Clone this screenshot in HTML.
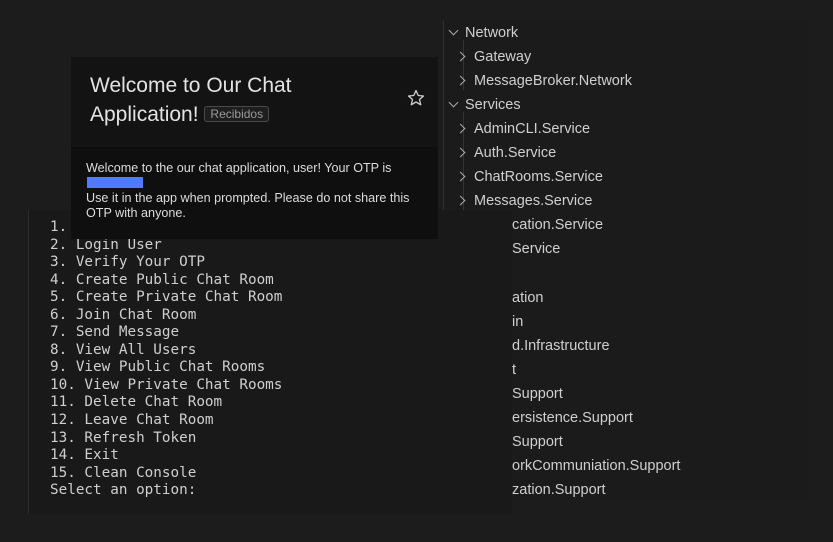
<!DOCTYPE html>
<html><head><meta charset="utf-8"><style>
*{margin:0;padding:0;box-sizing:border-box}
body{width:833px;height:542px;background:#1c1c1c;position:relative;overflow:hidden;font-family:"Liberation Sans",sans-serif}
.tree{position:absolute;left:443px;top:20px;width:365px;height:480px;background:#1b1b1b;border-left:1px solid #2e2e2e}
.r{position:absolute;color:#cfcfcf;font-size:14.5px;white-space:nowrap;line-height:16px}
.ch{position:absolute;width:7px;height:7px;border-right:1.1px solid #aaa;border-bottom:1.1px solid #aaa}
.term{position:absolute;left:28px;top:210px;width:484px;height:304px;background:#191919;border-left:1px solid #2c2c2c}
.term pre{position:absolute;left:21px;top:9px;font-family:"DejaVu Sans Mono","Liberation Mono",monospace;font-size:14.3px;line-height:17.55px;color:#cfcfcf}
.card{position:absolute;left:71px;top:57px;width:367px;height:182px;background:#0f0f0f}
.hd{position:absolute;left:0;top:0;width:367px;height:90px;background:#131313}
.t{position:absolute;left:19px;top:14px;font-size:21px;line-height:29px;color:#e3e3e3}
.chip{display:inline-block;border:1px solid #4a4a4a;border-radius:3px;font-size:12px;color:#9a9a9a;padding:0 5px;line-height:14px;vertical-align:3px;background:#1e1e1e}
.b{position:absolute;left:15px;top:104px;font-size:12.6px;line-height:15px;color:#dcdcdc;width:345px}
</style></head><body>
<div class="tree">
<div style="position:absolute;left:19px;top:20px;height:50px;border-left:1px solid #333"></div>
<div style="position:absolute;left:19px;top:92px;height:110px;border-left:1px solid #333"></div>
</div>
<div class="ch" style="left:450px;top:27px;transform:rotate(45deg)"></div><div class="r" style="left:465px;top:25px">Network</div>
<div class="ch" style="left:457px;top:53px;transform:rotate(-45deg)"></div><div class="r" style="left:474px;top:49px">Gateway</div>
<div class="ch" style="left:457px;top:77px;transform:rotate(-45deg)"></div><div class="r" style="left:474px;top:73px">MessageBroker.Network</div>
<div class="ch" style="left:450px;top:99px;transform:rotate(45deg)"></div><div class="r" style="left:465px;top:97px">Services</div>
<div class="ch" style="left:457px;top:125px;transform:rotate(-45deg)"></div><div class="r" style="left:474px;top:121px">AdminCLI.Service</div>
<div class="ch" style="left:457px;top:149px;transform:rotate(-45deg)"></div><div class="r" style="left:474px;top:145px">Auth.Service</div>
<div class="ch" style="left:457px;top:173px;transform:rotate(-45deg)"></div><div class="r" style="left:474px;top:169px">ChatRooms.Service</div>
<div class="ch" style="left:457px;top:197px;transform:rotate(-45deg)"></div><div class="r" style="left:474px;top:193px">Messages.Service</div>
<div class="r" style="left:512px;top:217px">cation.Service</div>
<div class="r" style="left:512px;top:241px">Service</div>
<div class="r" style="left:512px;top:290px">ation</div>
<div class="r" style="left:512px;top:314px">in</div>
<div class="r" style="left:512px;top:338px">d.Infrastructure</div>
<div class="r" style="left:512px;top:362px">t</div>
<div class="r" style="left:512px;top:386px">Support</div>
<div class="r" style="left:512px;top:410px">ersistence.Support</div>
<div class="r" style="left:512px;top:434px">Support</div>
<div class="r" style="left:512px;top:458px">orkCommuniation.Support</div>
<div class="r" style="left:512px;top:482px">zation.Support</div>
<div class="term"><pre>1.
2. Login User
3. Verify Your OTP
4. Create Public Chat Room
5. Create Private Chat Room
6. Join Chat Room
7. Send Message
8. View All Users
9. View Public Chat Rooms
10. View Private Chat Rooms
11. Delete Chat Room
12. Leave Chat Room
13. Refresh Token
14. Exit
15. Clean Console
Select an option:</pre></div>
<div class="card">
<div class="hd"></div>
<div class="t">Welcome to Our Chat<br>Application! <span class="chip">Recibidos</span></div>
<svg style="position:absolute;left:335px;top:31px" width="20" height="20" viewBox="0 0 24 24"><path d="M12 3l2.7 6 6.3.6-4.8 4.2 1.5 6.3L12 16.8 6.3 20.1l1.5-6.3L3 9.6l6.3-.6z" fill="none" stroke="#ccc" stroke-width="1.6" stroke-linejoin="round"/></svg>
<div class="b">Welcome to the our chat application, user! Your OTP is<br><span style="display:inline-block;width:56px;height:11px;background:#4f7cff;margin-left:1px;vertical-align:-1px"></span><br>Use it in the app when prompted. Please do not share this OTP with anyone.</div>
</div>
</body></html>
